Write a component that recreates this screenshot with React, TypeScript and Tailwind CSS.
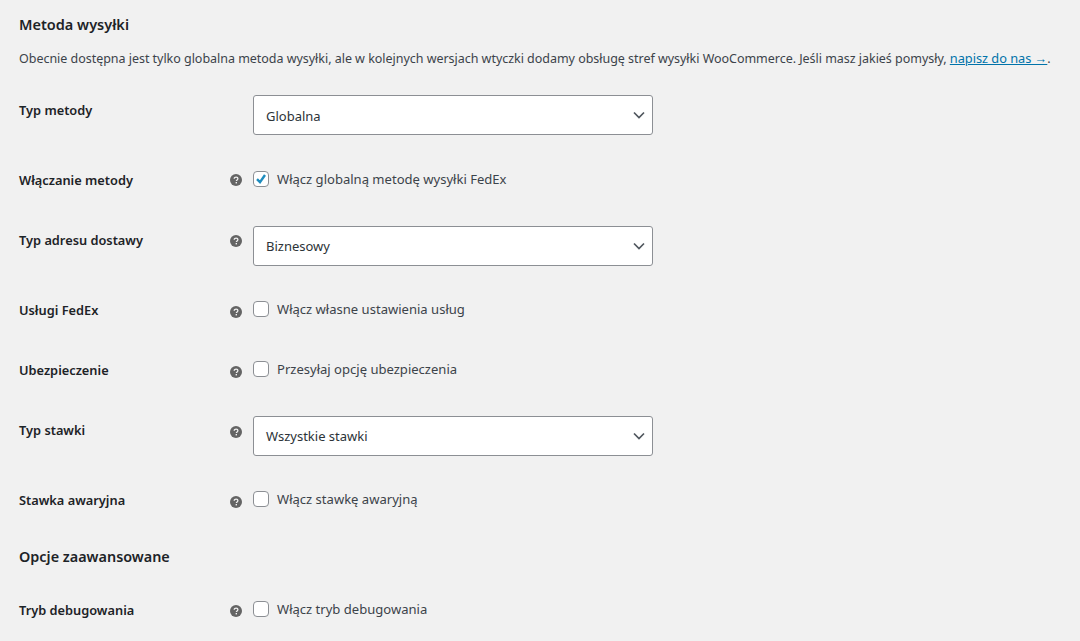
import React from "react";

function Tip() {
  return (
    <svg width="12" height="12" viewBox="0 0 12 12" className="block">
      <circle cx="6" cy="6" r="6" fill="#646464" />
      <path d="M4.2 4.7c0-1 .8-1.6 1.9-1.6s1.8.6 1.8 1.5c0 1.3-1.5 1.3-1.5 2.4" fill="none" stroke="#f1f1f1" strokeWidth="1.3" />
      <rect x="5.6" y="8" width="1.4" height="1.4" fill="#f1f1f1" />
    </svg>
  );
}

function Select({ value, first }: { value: string; first?: boolean }) {
  return (
    <div className="flex h-[40px] w-[400px] items-center justify-between rounded-[3px] border border-[#8c8f94] bg-white pl-[12px] pr-[7px] text-[#2c3338]">
      <span className={first ? "pt-[1px]" : ""}>{value}</span>
      <svg width="12" height="8" viewBox="0 0 12 8" fill="none" stroke="#50575e" strokeWidth="1.7">
        <path d="M1 1.5l5 5 5-5" />
      </svg>
    </div>
  );
}

function Check({ label, checked }: { label: string; checked?: boolean }) {
  return (
    <div className="flex h-[20px] items-center">
      <span className="flex h-[16px] w-[16px] items-center justify-center rounded-[4px] border border-[#8c8f94] bg-white">
        {checked && (
          <svg width="14" height="14" viewBox="0 0 14 14" fill="none" stroke="#1e8cbe" strokeWidth="2.4">
            <path d="M3 7.2l3 3 5-7.2" />
          </svg>
        )}
      </span>
      <span className="ml-[8px] text-[13.05px]">{label}</span>
    </div>
  );
}

function Row({ label, top, tip = true, labelTop, tipTop, children }: { label: string; top: string; tip?: boolean; labelTop: string; tipTop: string; children: React.ReactNode }) {
  return (
    <div className={`flex items-start ${top}`}>
      <div className={`w-[211px] shrink-0 text-[12.8px] font-semibold text-[#1d2327] ${labelTop}`}>{label}</div>
      <div className={`flex w-[23px] shrink-0 ${tipTop}`}>
        {tip && (
          <div className="flex h-[20px] items-center">
            <Tip />
          </div>
        )}
      </div>
      {children}
    </div>
  );
}

export default function App() {
  return (
    <div className="h-[641px] w-[1080px] overflow-hidden bg-[#f1f1f1] pl-[19px] text-[13px] leading-[20px] text-[#3c434a] [font-family:'Noto_Sans',sans-serif]">
      <h2 className="pt-[14px] text-[14.5px] font-semibold leading-[20px] text-[#1d2327]">Metoda wysyłki</h2>
      <p className="mt-[14px] h-[20px] whitespace-nowrap text-[12.5px] tracking-[-0.03px]">
        Obecnie dostępna jest tylko globalna metoda wysyłki, ale w kolejnych wersjach wtyczki dodamy obsługę stref wysyłki WooCommerce. Jeśli masz jakieś pomysły,{" "}
        <a className="text-[12.8px] text-[#0073aa] underline">napisz do nas →</a>.
      </p>
      <Row label="Typ metody" top="mt-[27px] h-[40px]" labelTop="pt-[5px]" tipTop="" tip={false}>
        <Select value="Globalna" first />
      </Row>
      <Row label="Włączanie metody" top="mt-[34px] h-[20px]" labelTop="pt-[1px]" tipTop="pt-[1px]">
        <Check label="Włącz globalną metodę wysyłki FedEx" checked />
      </Row>
      <Row label="Typ adresu dostawy" top="mt-[37px] h-[40px]" labelTop="pt-[4px]" tipTop="pt-[5px]">
        <Select value="Biznesowy" />
      </Row>
      <Row label="Usługi FedEx" top="mt-[33px] h-[20px]" labelTop="pt-[1px]" tipTop="pt-[3px]">
        <Check label="Włącz własne ustawienia usług" />
      </Row>
      <Row label="Ubezpieczenie" top="mt-[40px] h-[20px]" labelTop="pt-[1px]" tipTop="pt-[3px]">
        <Check label="Przesyłaj opcję ubezpieczenia" />
      </Row>
      <Row label="Typ stawki" top="mt-[37px] h-[40px]" labelTop="pt-[4px]" tipTop="pt-[6px]">
        <Select value="Wszystkie stawki" />
      </Row>
      <Row label="Stawka awaryjna" top="mt-[33px] h-[20px]" labelTop="pt-[1px]" tipTop="pt-[3px]">
        <Check label="Włącz stawkę awaryjną" />
      </Row>
      <h2 className="mt-[38px] text-[14.4px] font-semibold leading-[20px] text-[#1d2327]">Opcje zaawansowane</h2>
      <Row label="Tryb debugowania" top="mt-[32px] h-[20px]" labelTop="pt-[1px]" tipTop="pt-[2px]">
        <Check label="Włącz tryb debugowania" />
      </Row>
    </div>
  );
}
